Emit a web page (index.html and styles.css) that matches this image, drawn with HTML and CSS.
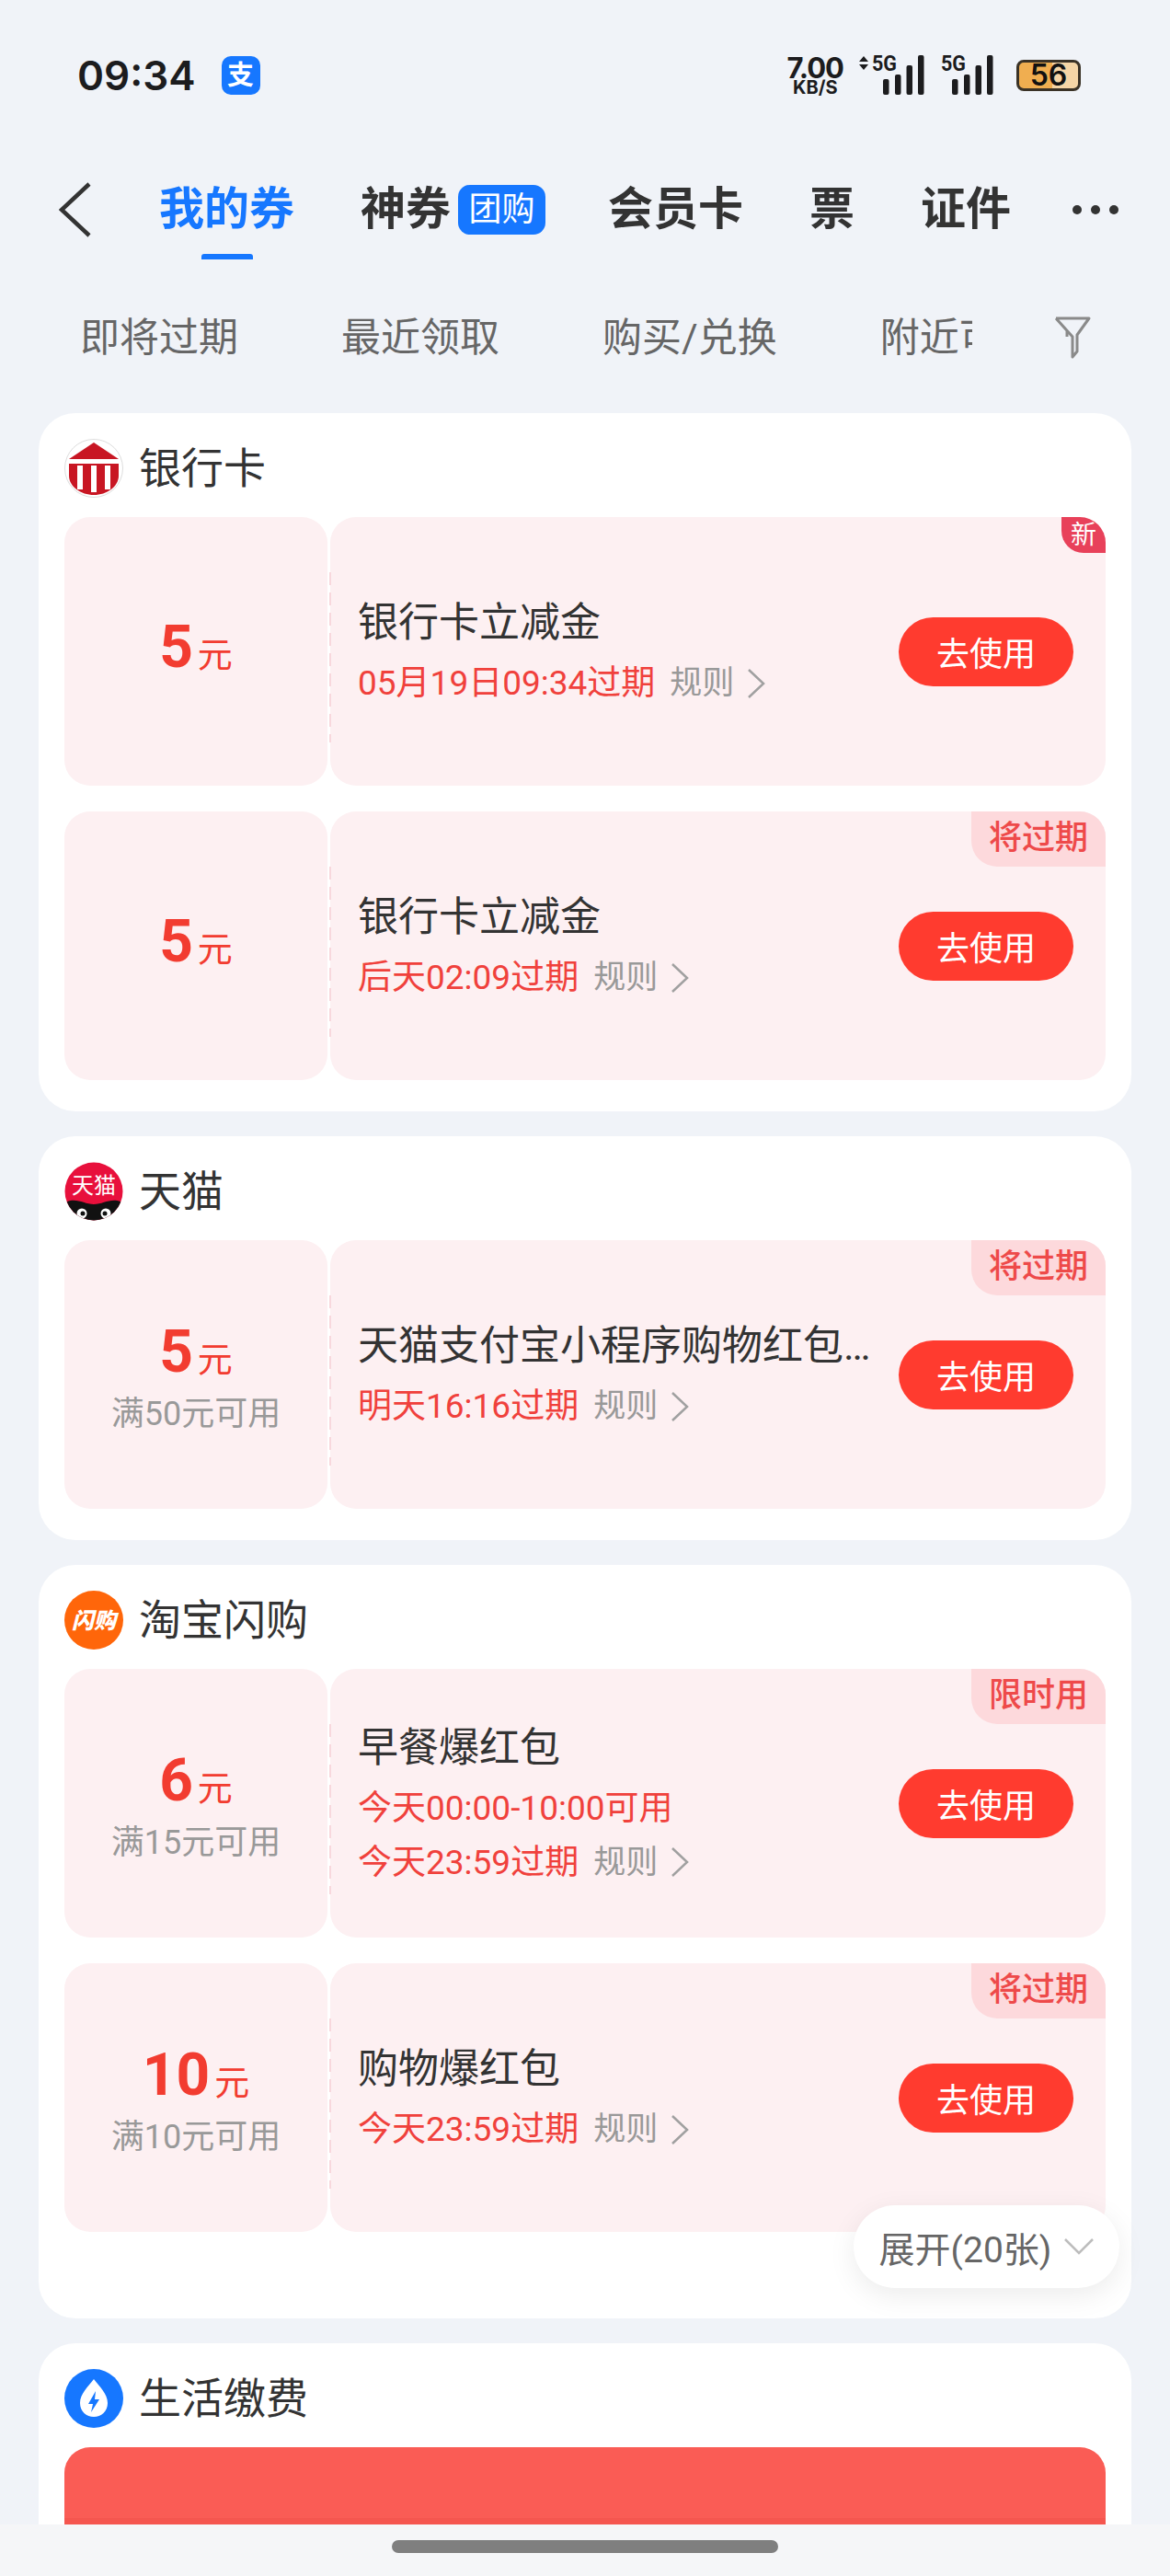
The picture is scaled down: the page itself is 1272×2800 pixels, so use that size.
FILE: index.html
```html
<!DOCTYPE html>
<html lang="zh-CN">
<head>
<meta charset="utf-8">
<title>我的券</title>
<link rel="stylesheet" href="styles.css">
</head>
<body>
<div class="page">
  <header class="status">
    <div class="status-left">
      <span class="time">09:34</span>
      <span class="alipay">支</span>
    </div>
    <div class="status-right">
      <div class="speed"><span class="speed-num">7.00</span><span class="speed-unit">KB/S</span></div>
      <svg class="sig1" width="72" height="44" viewBox="0 0 72 44">
        <path d="M1 7 L6 1 L11 7Z M1 10 L11 10 L6 16Z" fill="#1c1c1e"/>
        <text x="15" y="17" class="sig-text" textLength="27" lengthAdjust="spacingAndGlyphs">5G</text>
        <rect x="27" y="26" width="6.5" height="17" rx="2" fill="#1c1c1e"/>
        <rect x="40" y="21" width="6.5" height="22" rx="2" fill="#1c1c1e"/>
        <rect x="52.500" y="11" width="6.5" height="32" rx="2" fill="#1c1c1e"/>
        <rect x="65" y="0" width="6.5" height="43" rx="2" fill="#1c1c1e"/>
      </svg>
      <svg class="sig2" width="57" height="44" viewBox="0 0 57 44">
        <text x="0" y="17" class="sig-text" textLength="27" lengthAdjust="spacingAndGlyphs">5G</text>
        <rect x="12" y="26" width="6.5" height="17" rx="2" fill="#1c1c1e"/>
        <rect x="25" y="21" width="6.5" height="22" rx="2" fill="#1c1c1e"/>
        <rect x="37.500" y="11" width="6.5" height="32" rx="2" fill="#1c1c1e"/>
        <rect x="50" y="0" width="6.5" height="43" rx="2" fill="#1c1c1e"/>
      </svg>
      <div class="battery">56</div>
    </div>
  </header>

  <nav class="nav">
    <svg class="back" width="36" height="60" viewBox="0 0 36 60"><path d="M33 2 L3 30 L33 58" fill="none" stroke="#333" stroke-width="4.500"/></svg>
    <div class="tabs">
      <a class="tab tab-active">我的券</a>
      <div class="tab-group"><a class="tab">神券</a><span class="tuan">团购</span></div>
      <a class="tab">会员卡</a>
      <a class="tab">票</a>
      <a class="tab">证件</a>
    </div>
    <div class="dots"><i></i><i></i><i></i></div>
  </nav>

  <div class="filters">
    <div class="filter-scroll">
      <span class="filter">即将过期</span>
      <span class="filter">最近领取</span>
      <span class="filter">购买/兑换</span>
      <span class="filter">附近可用</span>
    </div>
    <svg class="funnel" width="40" height="46" viewBox="0 0 40 46"><path d="M2 2 H38 L25 20 V38 L20 44 L20 22 L2 2 M14 15 V22" fill="none" stroke="#8a8a8a" stroke-width="3" stroke-linejoin="round"/></svg>
  </div>

  <main class="list">
    <section class="card">
      <div class="card-head">
        <svg class="logo" width="64" height="64" viewBox="0 0 64 64">
          <circle cx="32" cy="32" r="31.500" fill="#fff" stroke="#ddd"/>
          <path d="M32 4 L59 22 H5Z" fill="#c81623"/>
          <path d="M5 27 H59 V40 C59 52 46 61 32 61 C18 61 5 52 5 40Z" fill="#c81623"/>
          <path d="M14 29 H20 V55 H14Z M29 29 H35 V58 H29Z M44 29 H50 V55 H44Z" fill="#fff"/>
        </svg>
        <h2 class="card-title">银行卡</h2>
      </div>
      <div class="coupons">
        <article class="coupon">
          <div class="c-left"><div class="amount"><b>5</b>元</div></div>
          <div class="c-right">
            <span class="tag tag-new">新</span>
            <div class="info">
              <div class="c-title">银行卡立减金</div>
              <div class="c-date"><span>05月19日09:34过期</span><span class="rule">规则</span><svg class="chev" width="20" height="34" viewBox="0 0 20 34"><path d="M2 2 L18 17 L2 32" fill="none" stroke="#a0a0a0" stroke-width="2.500"/></svg></div>
            </div>
            <button class="use">去使用</button>
          </div>
        </article>
        <article class="coupon">
          <div class="c-left"><div class="amount"><b>5</b>元</div></div>
          <div class="c-right">
            <span class="tag">将过期</span>
            <div class="info">
              <div class="c-title">银行卡立减金</div>
              <div class="c-date"><span>后天02:09过期</span><span class="rule">规则</span><svg class="chev" width="20" height="34" viewBox="0 0 20 34"><path d="M2 2 L18 17 L2 32" fill="none" stroke="#a0a0a0" stroke-width="2.500"/></svg></div>
            </div>
            <button class="use">去使用</button>
          </div>
        </article>
      </div>
    </section>

    <section class="card">
      <div class="card-head">
        <svg class="logo" width="64" height="64" viewBox="0 0 64 64">
          <defs><clipPath id="tm"><circle cx="32" cy="32" r="31.500"/></clipPath></defs>
          <circle cx="32" cy="32" r="31.500" fill="#e8103c"/>
          <text x="32" y="34" class="tm-text" text-anchor="middle">天猫</text>
          <g clip-path="url(#tm)">
            <path d="M3 43 C14 39 22 46 32 46 C42 46 50 39 61 43 L58 66 H6Z" fill="#111"/>
            <circle cx="19" cy="56" r="5.500" fill="#fff"/>
            <circle cx="45" cy="56" r="5.500" fill="#fff"/>
            <circle cx="20" cy="56" r="2.500" fill="#111"/>
            <circle cx="44" cy="56" r="2.500" fill="#111"/>
          </g>
        </svg>
        <h2 class="card-title">天猫</h2>
      </div>
      <div class="coupons">
        <article class="coupon">
          <div class="c-left has-sub"><div class="amount"><b>5</b>元</div><div class="sub">满50元可用</div></div>
          <div class="c-right">
            <span class="tag">将过期</span>
            <div class="info">
              <div class="c-title">天猫支付宝小程序购物红包…</div>
              <div class="c-date"><span>明天16:16过期</span><span class="rule">规则</span><svg class="chev" width="20" height="34" viewBox="0 0 20 34"><path d="M2 2 L18 17 L2 32" fill="none" stroke="#a0a0a0" stroke-width="2.500"/></svg></div>
            </div>
            <button class="use">去使用</button>
          </div>
        </article>
      </div>
    </section>

    <section class="card card-more">
      <div class="card-head">
        <svg class="logo" width="64" height="64" viewBox="0 0 64 64">
          <circle cx="32" cy="32" r="32" fill="#ff660a"/>
          <text x="32" y="41" class="sg-text" text-anchor="middle">闪购</text>
        </svg>
        <h2 class="card-title">淘宝闪购</h2>
      </div>
      <div class="coupons">
        <article class="coupon">
          <div class="c-left has-sub"><div class="amount"><b>6</b>元</div><div class="sub">满15元可用</div></div>
          <div class="c-right">
            <span class="tag">限时用</span>
            <div class="info">
              <div class="c-title">早餐爆红包</div>
              <div class="c-date">今天00:00-10:00可用</div>
              <div class="c-date"><span>今天23:59过期</span><span class="rule">规则</span><svg class="chev" width="20" height="34" viewBox="0 0 20 34"><path d="M2 2 L18 17 L2 32" fill="none" stroke="#a0a0a0" stroke-width="2.500"/></svg></div>
            </div>
            <button class="use">去使用</button>
          </div>
        </article>
        <article class="coupon">
          <div class="c-left has-sub"><div class="amount"><b>10</b>元</div><div class="sub">满10元可用</div></div>
          <div class="c-right">
            <span class="tag">将过期</span>
            <div class="info">
              <div class="c-title">购物爆红包</div>
              <div class="c-date"><span>今天23:59过期</span><span class="rule">规则</span><svg class="chev" width="20" height="34" viewBox="0 0 20 34"><path d="M2 2 L18 17 L2 32" fill="none" stroke="#a0a0a0" stroke-width="2.500"/></svg></div>
            </div>
            <button class="use">去使用</button>
          </div>
        </article>
      </div>
      <button class="expand">展开(20张)<svg width="32" height="18" viewBox="0 0 32 18"><path d="M1 1 L16 16 L31 1" fill="none" stroke="#bdbdbd" stroke-width="2.500"/></svg></button>
    </section>

    <section class="card">
      <div class="card-head">
        <svg class="logo" width="64" height="64" viewBox="0 0 64 64">
          <circle cx="32" cy="32" r="32" fill="#1677ff"/>
          <path d="M32 11 C38 19 47 27 47 37 C47 46 40 52 32 52 C24 52 17 46 17 37 C17 27 26 19 32 11Z" fill="#fff"/>
          <path d="M34 24 L26 38 H31 L29 47 L38 33 H33Z" fill="#1677ff"/>
        </svg>
        <h2 class="card-title">生活缴费</h2>
      </div>
      <div class="banner"></div>
    </section>
  </main>

  <div class="home-bar"><span class="home-ind"></span></div>
</div>
</body>
</html>
```
FILE: styles.css
```css
* { box-sizing: border-box; }
html, body { margin: 0; padding: 0; }
body {
  font-family: Roboto, "Noto Sans CJK SC", sans-serif;
  color: #333;
  background: #f0f3f8;
}
.page {
  position: relative;
  width: 1272px;
  height: 2800px;
  overflow: hidden;
  background: #f0f3f8;
}

/* status bar */
.status {
  height: 164px;
  padding: 0 97px 0 84px;
  display: flex;
  align-items: center;
  justify-content: space-between;
}
.status-left { display: flex; align-items: center; gap: 28px; }
.time {
  font-family: Inter, sans-serif;
  font-size: 44px;
  font-weight: 600;
  color: #1c1c1e;
}
.alipay {
  width: 42px;
  height: 42px;
  border-radius: 10px;
  background: #1677ff;
  color: #fff;
  font-size: 29px;
  font-weight: 700;
  line-height: 42px;
  text-align: center;
}
.status-right { display: flex; align-items: center; }
.speed {
  display: flex;
  flex-direction: column;
  align-items: center;
  color: #1c1c1e;
  font-family: Inter, sans-serif;
  font-weight: 700;
}
.speed-num { font-size: 31px; line-height: 27px; letter-spacing: -1px; }
.speed-unit { font-size: 20px; line-height: 17px; }
.sig1 { margin-left: 16px; }
.sig2 { margin-left: 18px; }
.sig-text { font-family: Roboto, sans-serif; font-weight: 700; font-size: 24px; fill: #1c1c1e; }
.battery {
  margin-left: 25px;
  width: 70px;
  height: 34px;
  border: 3px solid #3a3226;
  border-radius: 8px;
  background: linear-gradient(to right, #f0ae50 0 56%, #f5d5a6 56% 100%);
  font-family: Inter, sans-serif;
  font-weight: 600;
  font-size: 32px;
  line-height: 28px;
  text-align: center;
  color: #111;
}

/* nav */
.nav {
  height: 128px;
  padding: 0 56px 0 64px;
  display: flex;
  align-items: center;
}
.back { flex: none; }
.tabs {
  margin-left: 73px;
  display: flex;
  align-items: center;
  gap: 72px;
  flex: 1;
}
.tab {
  position: relative;
  font-size: 49px;
  font-weight: 700;
  line-height: 66px;
  color: #333;
}
.tab-active { color: #1677ff; }
.tab-active::after {
  content: "";
  position: absolute;
  left: 46px;
  bottom: -21px;
  width: 56px;
  height: 6px;
  border-radius: 3px 3px 0 0;
  background: #1677ff;
}
.tab-group { display: flex; align-items: center; gap: 8px; margin-right: -4px; }
.tuan {
  width: 95px;
  height: 54px;
  border-radius: 13px;
  background: #1677ff;
  color: #fff;
  font-size: 36px;
  line-height: 54px;
  text-align: center;
}
.dots { display: flex; gap: 10px; }
.dots i { width: 10px; height: 10px; border-radius: 50%; background: #333; }

/* filters */
.filters {
  height: 150px;
  padding: 0 86px 0 87px;
  display: flex;
  align-items: center;
  justify-content: space-between;
}
.filter-scroll {
  width: 970px;
  overflow: hidden;
  display: flex;
  gap: 112px;
  white-space: nowrap;
}
.filter { font-size: 43px; line-height: 60px; color: #666; flex: none; }
.funnel { flex: none; }

/* cards */
.list {
  padding: 7px 42px 0;
  display: flex;
  flex-direction: column;
  gap: 27px;
}
.card {
  position: relative;
  background: #fff;
  border-radius: 40px;
  padding: 0 28px 34px;
}
.card-more { padding-bottom: 94px; }
.card-head {
  height: 113px;
  padding: 28px 0 21px;
  display: flex;
  align-items: center;
  gap: 17px;
}
.logo { flex: none; }
.card-title { margin: 0; font-size: 46px; font-weight: 400; line-height: 64px; color: #333; }
.tm-text { font-family: "Noto Sans CJK SC", sans-serif; font-size: 24px; fill: #fff; }
.sg-text { font-family: "Noto Sans CJK SC", sans-serif; font-size: 24px; font-weight: 900; font-style: italic; fill: #fff; }

.coupons { display: flex; flex-direction: column; gap: 28px; }
.coupon { display: flex; height: 292px; gap: 3px; }
.c-left {
  flex: none;
  width: 286px;
  border-radius: 28px;
  background: #fdf0f2;
  display: flex;
  flex-direction: column;
  align-items: center;
  justify-content: center;
}
.has-sub { padding-top: 18px; }
.amount { color: #f23c30; font-size: 38px; line-height: 60px; }
.amount b { font-size: 64px; font-weight: 700; margin-right: 5px; }
.sub { font-size: 36px; line-height: 58px; color: #999; }
.c-right {
  position: relative;
  flex: 1;
  min-width: 0;
  border-radius: 28px;
  background: #fdf0f2;
  display: flex;
  align-items: center;
  padding: 0 35px 0 30px;
}
.c-right::before {
  content: "";
  position: absolute;
  left: -1px;
  top: 60px;
  bottom: 47px;
  width: 2px;
  background: repeating-linear-gradient(to bottom, #f8d8dd 0 14px, transparent 14px 22px);
}
.info { flex: 1; min-width: 0; padding-top: 3px; }
.c-title { font-size: 44px; line-height: 60px; color: #333; margin-bottom: 6px; white-space: nowrap; }
.c-date {
  display: flex;
  align-items: center;
  font-size: 37px;
  line-height: 59px;
  color: #f0413c;
  white-space: nowrap;
}
.rule { margin-left: 16px; font-size: 35px; color: #999; }
.chev { margin-left: 14px; }
.use {
  flex: none;
  width: 190px;
  height: 75px;
  padding: 0;
  border: 0;
  border-radius: 38px;
  background: #ff3b2f;
  color: #fff;
  font-family: inherit;
  font-size: 36px;
}
.tag {
  position: absolute;
  top: 0;
  right: 0;
  width: 146px;
  height: 60px;
  border-radius: 0 28px 0 28px;
  background: #fdd9dc;
  color: #ee4a4a;
  font-size: 36px;
  font-weight: 500;
  line-height: 58px;
  text-align: center;
}
.tag-new {
  width: 48px;
  height: 39px;
  border-radius: 0 28px 0 24px;
  background: #e8415a;
  color: #fff;
  font-size: 28px;
  font-weight: 400;
  line-height: 39px;
}
.expand {
  position: absolute;
  top: 696px;
  right: 13px;
  width: 289px;
  height: 90px;
  padding: 0;
  border: 0;
  border-radius: 45px;
  background: #fff;
  box-shadow: 0 8px 30px rgba(0, 0, 0, .08);
  color: #666;
  font-family: inherit;
  font-size: 39px;
  display: flex;
  align-items: center;
  justify-content: center;
  gap: 14px;
}
.banner {
  height: 200px;
  border-radius: 28px 28px 0 0;
  background: linear-gradient(to bottom, #fa5c55 0 77px, #f5564f 77px 100%);
}

/* gesture bar */
.home-bar {
  position: absolute;
  left: 0;
  right: 0;
  bottom: 0;
  height: 56px;
  background: #f5f6f8;
  display: flex;
  justify-content: center;
  padding-top: 17px;
}
.home-ind { width: 420px; height: 14px; border-radius: 7px; background: #7f7f7f; }
```
